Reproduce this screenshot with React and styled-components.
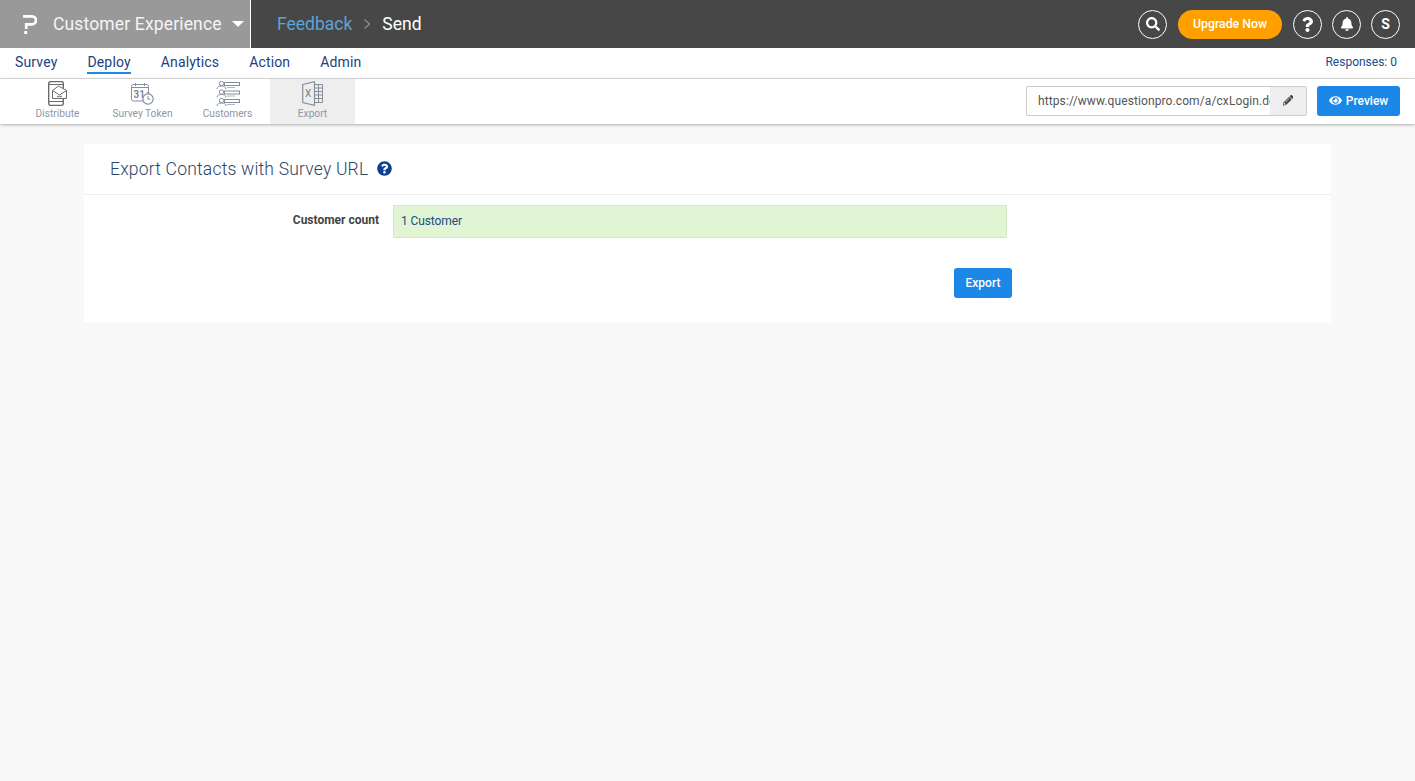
import React from "react";
import styled, { createGlobalStyle } from "styled-components";
import { FaSearch, FaBell, FaQuestion, FaEye, FaPencilAlt, FaQuestionCircle } from "react-icons/fa";

const GlobalStyle = createGlobalStyle`
  html, body {
    margin: 0;
    height: 100%;
    background: #f9f9f9;
    font-family: "Roboto", "Noto Sans", sans-serif;
  }
  * {
    box-sizing: border-box;
  }
`;

const TopBar = styled.header`
  height: 48px;
  background: #474747;
  display: flex;
  align-items: center;
  color: #fff;
`;

const Brand = styled.div`
  width: 251px;
  height: 48px;
  background: #999;
  border-right: 1px solid #fff;
  display: flex;
  align-items: center;
  padding-left: 23px;
  svg {
    flex-shrink: 0;
  }
`;

const BrandName = styled.span`
  font-size: 17.5px;
  margin-left: 16px;
  color: #f4f4f4;
  letter-spacing: 0.15px;
  white-space: nowrap;
`;

const Caret = styled.i`
  margin-left: 10px;
  width: 0;
  height: 0;
  border-left: 6px solid transparent;
  border-right: 6px solid transparent;
  border-top: 6px solid #fff;
`;

const Crumbs = styled.div`
  display: flex;
  align-items: center;
  margin-left: 26px;
  font-size: 17.5px;
`;

const CrumbLink = styled.span`
  color: #5ea3d6;
`;

const CrumbSep = styled.span`
  display: flex;
  margin: 0 11px;
`;

const TopActions = styled.div`
  margin-left: auto;
  margin-right: 15px;
  display: flex;
  align-items: center;
`;

const RoundButton = styled.span`
  width: 29px;
  height: 29px;
  border: 1px solid #fff;
  border-radius: 50%;
  display: flex;
  align-items: center;
  justify-content: center;
  font-size: 14px;
  font-weight: 700;
  margin-left: ${({ $gap }) => $gap || 10}px;
`;

const Upgrade = styled.span`
  width: 104px;
  height: 29px;
  margin-left: 11px;
  padding-bottom: 1px;
  border-radius: 15px;
  background: #ff9f00;
  display: flex;
  align-items: center;
  justify-content: center;
  font-size: 12.3px;
  font-weight: 500;
`;

const MainNav = styled.nav`
  height: 31px;
  background: #fff;
  border-bottom: 1px solid #ddd;
  display: flex;
  align-items: center;
  padding: 0 18px 2px 15px;
`;

const NavItem = styled.a`
  font-size: 14px;
  letter-spacing: 0.15px;
  line-height: 19px;
  color: #1c3f80;
  margin-right: 30px;
  border-bottom: 2px solid ${({ $active }) => ($active ? "#1b87e6" : "transparent")};
  position: relative;
  top: 1px;
`;

const Responses = styled.span`
  margin-left: auto;
  font-size: 12px;
  color: #1c4a86;
`;

const SubNav = styled.div`
  height: 45px;
  background: #fff;
  box-shadow: 0 1px 3px rgba(0, 0, 0, 0.3);
  display: flex;
  align-items: center;
  padding: 0 15px;
  position: relative;
`;

const Tab = styled.a`
  width: 85px;
  height: 45px;
  background: ${({ $active }) => ($active ? "#eeeeee" : "transparent")};
  display: flex;
  flex-direction: column;
  align-items: center;
  padding-top: 2px;
  font-size: 10.2px;
  color: #8d96a8;
  white-space: nowrap;
  svg {
    display: block;
    margin-bottom: 2px;
  }
`;

const UrlGroup = styled.div`
  margin-left: auto;
  margin-bottom: 2px;
  width: 281px;
  height: 30px;
  border: 1px solid #ccc;
  border-radius: 2px;
  display: flex;
  overflow: hidden;
`;

const UrlText = styled.div`
  flex: 1;
  min-width: 0;
  padding-left: 11px;
  font-size: 12px;
  line-height: 28px;
  color: #555;
  white-space: nowrap;
  overflow: hidden;
  letter-spacing: 0.1px;
`;

const UrlEdit = styled.div`
  width: 36px;
  background: #eee;
  color: #444;
  font-size: 10.5px;
  display: flex;
  align-items: center;
  justify-content: center;
`;

const PreviewButton = styled.button`
  margin: 0 0 2px 10px;
  width: 83px;
  height: 30px;
  border: 0;
  border-radius: 3px;
  background: #1b87e6;
  color: #fff;
  font: 500 12px "Roboto", sans-serif;
  display: flex;
  align-items: center;
  justify-content: center;
  gap: 4px;
`;

const Page = styled.main`
  padding: 20px 84px;
`;

const Card = styled.section`
  background: #fff;
  height: 178px;
  display: flex;
  flex-direction: column;
`;

const CardHead = styled.div`
  height: 51px;
  border-bottom: 1px solid #eeeef3;
  padding: 0 0 1px 26px;
  display: flex;
  align-items: center;
`;

const Title = styled.h2`
  margin: 0;
  font-size: 17.5px;
  font-weight: 300;
  letter-spacing: 0.2px;
  color: #2c4468;
`;

const HelpIcon = styled.span`
  display: flex;
  margin-left: 9px;
  color: #0c3f8c;
  font-size: 15px;
`;

const Field = styled.div`
  display: flex;
  align-items: center;
  margin-top: 10px;
`;

const Label = styled.label`
  width: 295px;
  text-align: right;
  font-size: 12px;
  font-weight: 700;
  color: #444;
  margin-top: -4px;
`;

const Value = styled.div`
  margin-left: 14px;
  width: 614px;
  height: 33px;
  background: #e1f5d5;
  border: 1px solid #d3e8c5;
  padding-left: 7px;
  font-size: 12px;
  letter-spacing: -0.1px;
  line-height: 30px;
  color: #1c4a86;
`;

const FormActions = styled.div`
  width: 928px;
  margin-top: 30px;
  display: flex;
  justify-content: flex-end;
`;

const ExportButton = styled.button`
  width: 58px;
  height: 30px;
  border: 0;
  border-radius: 3px;
  background: #1b87e6;
  color: #fff;
  font: 500 12px "Roboto", sans-serif;
`;

const LogoMark = () => (
  <svg width="14" height="19" viewBox="0 0 14 19" fill="none">
    <path d="M0 1.4h9a3.9 3.9 0 0 1 0 7.9H3.2v4.6" stroke="#fff" strokeWidth="2.7" />
    <rect x="1.2" y="16" width="3" height="3" fill="#fff" />
  </svg>
);

const DistributeIcon = () => (
  <svg width="19" height="25" viewBox="0 0 19 25" fill="none" stroke="#6b6b6b" strokeWidth="1">
    <rect x="0.7" y="0.6" width="14.6" height="23.8" rx="2" strokeWidth="1.4" />
    <path d="M1 3.5h14M1 20.5h14" />
    <path d="M4.5 9.5L10.5 5l8 4.5v8h-14z" fill="#fff" />
    <path d="M4.5 9.5l7 4.5 7-4.5" />
    <path d="M9 15.5h5" stroke="#888" strokeWidth="1.3" />
  </svg>
);

const TokenIcon = () => (
  <svg width="23" height="25" viewBox="0 0 23 25" fill="none" stroke="#868e9c" strokeWidth="1">
    <rect x="0.5" y="3.5" width="17" height="16.5" rx="2" />
    <path d="M4.5 2v3M13.5 2v3M0.5 6.5h17" />
    <text x="2.5" y="16.5" fontSize="10" fontWeight="500" fill="#737b89" stroke="none" fontFamily="Roboto, sans-serif">31</text>
    <circle cx="17" cy="18" r="5.2" fill="#fff" strokeWidth="1.2" />
    <path d="M17 15v3.2h2.4M15.5 11.8h3" />
  </svg>
);

const CustomersIcon = () => (
  <svg width="24" height="25" viewBox="0 0 24 25" fill="none" stroke="#868e9c" strokeWidth="1">
    {[0, 8.5, 17].map((y) => (
      <g key={y} transform={`translate(0 ${y})`}>
        <circle cx="5.5" cy="2.5" r="2.2" />
        <path d="M1 8c0-2 2-3 4.5-3S10 6 10 8" />
        <rect x="8.5" y="1.5" width="15" height="3" />
        <path d="M11 6.5h8" stroke="#b0b6c2" />
      </g>
    ))}
  </svg>
);

const ExportIcon = () => (
  <svg width="21" height="25" viewBox="0 0 21 25" fill="none" stroke="#868e9c" strokeWidth="1">
    <path d="M0.7 3.5L12.5 0.7v23.6L0.7 21.5z" fill="#eee" strokeWidth="1.2" />
    <path d="M12.5 3.5h8v18h-8M12.5 7h8M12.5 10.5h8M12.5 14h8M12.5 17.5h8M16.5 3.5v18" />
    <text x="3" y="16" fontSize="10" fill="#737b89" stroke="none" fontFamily="Roboto, sans-serif">X</text>
  </svg>
);

const navItems = ["Survey", "Deploy", "Analytics", "Action", "Admin"];
const tabs = [
  { label: "Distribute", Icon: DistributeIcon },
  { label: "Survey Token", Icon: TokenIcon },
  { label: "Customers", Icon: CustomersIcon },
  { label: "Export", Icon: ExportIcon, active: true },
];

export default function App() {
  return (
    <>
      <GlobalStyle />
      <TopBar>
        <Brand>
          <LogoMark />
          <BrandName>Customer Experience</BrandName>
          <Caret />
        </Brand>
        <Crumbs>
          <CrumbLink>Feedback</CrumbLink>
          <CrumbSep>
            <svg width="8" height="12" viewBox="0 0 8 12" fill="none" stroke="#8a8a8a" strokeWidth="1.3">
              <path d="M1.5 1.5L6.5 6l-5 4.5" />
            </svg>
          </CrumbSep>
          <span>Send</span>
        </Crumbs>
        <TopActions>
          <RoundButton><FaSearch size={14} /></RoundButton>
          <Upgrade>Upgrade Now</Upgrade>
          <RoundButton $gap={11}><FaQuestion size={15} /></RoundButton>
          <RoundButton><FaBell size={14} /></RoundButton>
          <RoundButton>S</RoundButton>
        </TopActions>
      </TopBar>
      <MainNav>
        {navItems.map((item) => (
          <NavItem key={item} $active={item === "Deploy"}>{item}</NavItem>
        ))}
        <Responses>Responses: 0</Responses>
      </MainNav>
      <SubNav>
        {tabs.map(({ label, Icon, active }) => (
          <Tab key={label} $active={active}>
            <Icon />
            {label}
          </Tab>
        ))}
        <UrlGroup>
          <UrlText>https://www.questionpro.com/a/cxLogin.do</UrlText>
          <UrlEdit><FaPencilAlt /></UrlEdit>
        </UrlGroup>
        <PreviewButton><FaEye size={13} />Preview</PreviewButton>
      </SubNav>
      <Page>
        <Card>
          <CardHead>
            <Title>Export Contacts with Survey URL</Title>
            <HelpIcon><FaQuestionCircle /></HelpIcon>
          </CardHead>
          <Field>
            <Label>Customer count</Label>
            <Value>1 Customer</Value>
          </Field>
          <FormActions>
            <ExportButton>Export</ExportButton>
          </FormActions>
        </Card>
      </Page>
    </>
  );
}
